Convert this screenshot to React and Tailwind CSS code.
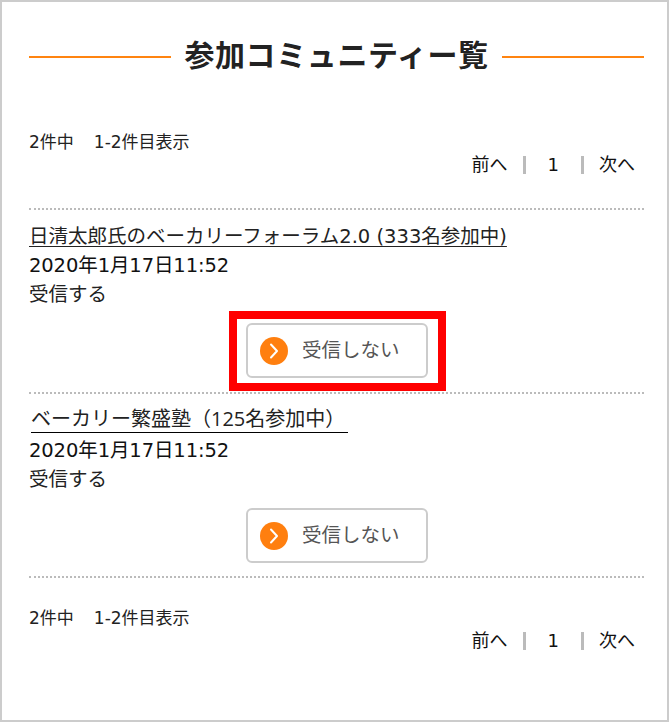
import React from 'react';

const Pager = () => (
  <div className="h-[66px]">
    <p className="pt-[2px] text-[17px] leading-[24px] text-[#222]">2件中　<span className="ml-[3px]">1-2件目表示</span></p>
    <div className="flex justify-end items-center mt-[-1px] pr-[9px] text-[18px] leading-[24px] text-[#111]">
      <span>前へ</span>
      <span className="w-[3px] h-[18px] bg-[#bbb] ml-[15px]" />
      <span className="mx-[22px]">1</span>
      <span className="w-[3px] h-[18px] bg-[#bbb] mr-[15px]" />
      <span>次へ</span>
    </div>
  </div>
);

const OffButton = () => (
  <button className="w-[182px] h-[55px] flex items-center pl-[12px] bg-white rounded-[6px] border-2 border-[#ccc]">
    <span className="w-[28px] h-[28px] rounded-full bg-[#ff7f0f] flex items-center justify-center">
      <svg width="12" height="18" viewBox="0 0 12 18" fill="none" stroke="#fff" strokeWidth="2" strokeLinecap="round" strokeLinejoin="round">
        <path d="M3 2.5 L9 9 L3 15.5" />
      </svg>
    </span>
    <span className="ml-[14px] text-[19.5px] text-[#555]">受信しない</span>
  </button>
);

const App = () => {
  return (
    <div className="w-[669px] h-[722px] border-2 border-[#ccc] bg-white pl-[27px] pr-[23px] font-['DejaVu_Sans','Noto_Sans_CJK_JP',sans-serif]">
      <div className="flex items-center h-[110px]">
        <span className="flex-1 h-[2px] bg-[#ff8410]" />
        <h1 className="px-[13px] text-[30px] leading-[40px] font-bold tracking-[0.6px] text-[#222] -mt-[2px]">参加コミュニティー覧</h1>
        <span className="flex-1 h-[2px] bg-[#ff8410]" />
      </div>
      <div className="pt-[16px] h-[96px]">
        <Pager />
      </div>

      <div className="border-t-2 border-dotted border-[#bbb] pt-[13px] h-[184px]">
        <a className="block w-fit text-[19.5px] leading-[27px] text-[#222] underline underline-offset-[3px]">日清太郎氏のベーカリーフォーラム2.0 (333名参加中)</a>
        <p className="text-[19.5px] leading-[29px] tracking-[-0.1px] text-[#111] mt-[1px]">2020年1月17日11:52</p>
        <p className="text-[19.5px] leading-[29px] text-[#222]">受信する</p>
        <div className="flex justify-center mt-[2px] pl-[2px]">
          <div className="border-[8px] border-[#f00] pl-[9px] pr-[10px] pt-[4px] pb-[5px]">
            <OffButton />
          </div>
        </div>
      </div>

      <div className="border-t-2 border-dotted border-[#bbb] pt-[11px] h-[184px]">
        <a className="block w-[317px] ml-[2px] border-b border-black font-['Open_Sans','Noto_Sans_CJK_JP',sans-serif] text-[20px] leading-[27px] text-[#222]">ベーカリー繁盛塾（125名参加中）</a>
        <p className="text-[19.5px] leading-[29px] tracking-[-0.1px] text-[#111] mt-[3px]">2020年1月17日11:52</p>
        <p className="text-[19.5px] leading-[29px] text-[#222]">受信する</p>
        <div className="flex justify-center mt-[14px] pl-[1px]">
          <OffButton />
        </div>
      </div>

      <div className="border-t-2 border-dotted border-[#bbb] pt-[26px]">
        <Pager />
      </div>
    </div>
  );
};

export default App;
